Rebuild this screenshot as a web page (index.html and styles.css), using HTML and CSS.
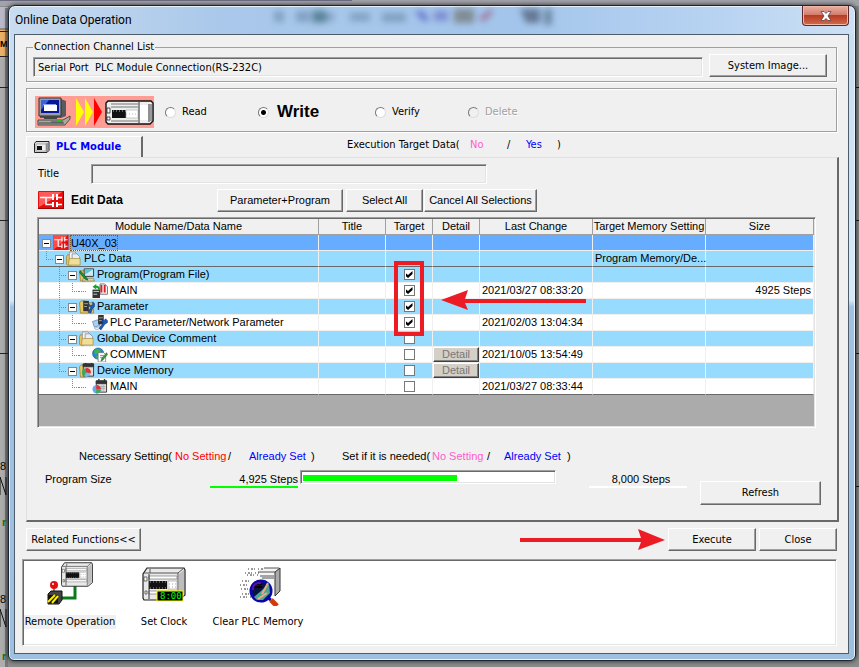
FILE: index.html
```html
<!DOCTYPE html>
<html lang="en">
<head>
<meta charset="utf-8">
<title>Online Data Operation</title>
<link rel="stylesheet" href="styles.css">
</head>
<body>
<svg class="defs" aria-hidden="true">
  <symbol id="folder" viewBox="0 0 16 16">
    <path d="M0 6l1-2h3l1 2v9H1l-1-1z" fill="#e8c55c" stroke="#9a7a28" stroke-width=".7"/>
    <path d="M3 1h6l2 2v9H3z" fill="#f4f4f4" stroke="#7c8790" stroke-width=".8"/>
    <path d="M6 3h5l3 3v8H6z" fill="#e8eef2" stroke="#7c8790" stroke-width=".8"/>
    <path d="M3 8h11.500v7H2z" fill="#efdd9a" stroke="#a58a3c" stroke-width=".7"/>
  </symbol>
  <symbol id="ladder" viewBox="0 0 26 18">
    <rect width="26" height="18" rx="1" fill="#e80c0c"/>
    <path d="M1 16V1h23L15 8z" fill="#ff5a58"/>
    <path d="M0 17.500h26M25.500 0v18" stroke="#a00000"/>
    <path d="M2 6.500h13M8 6.500v7h7M19 6.500h5M19 13.500h5" stroke="#fff" stroke-width="1.500" fill="none"/>
    <path d="M15 3v6M15 11v5M19 3v6M19 11v5" stroke="#fff" stroke-width="2"/>
  </symbol>
  <symbol id="plc" viewBox="0 0 44 34">
    <path d="M5 1h37l1 2v25l-6 5H2l-1-2V7z" fill="#e9e9e9" stroke="#222" stroke-width="1.200"/>
    <path d="M2 6h34v26M36 6l6-5M8 6V2" fill="none" stroke="#555"/>
    <path d="M37 7l5-4v24l-5 4z" fill="#bdbdbd"/>
    <path d="M7 9h28v3H7zM7 24h28v3H7z" fill="#fff" stroke="#777" stroke-width=".7"/>
    <path d="M7 14h18v8H7z" fill="#111"/>
    <path d="M26 14h9v8h-9z" fill="#fff" stroke="#999" stroke-width=".6"/>
    <path d="M8 15h17M8 21h17" stroke="#999" stroke-dasharray="1 2"/>
    <path d="M27 17h8M27 20h8" stroke="#aaa" stroke-dasharray="1 2"/>
    <path d="M2 10h3v4H2zM3 24h2v3H3z" fill="#fff" stroke="#333" stroke-width=".7"/>
    <path d="M7 7v25" stroke="#333"/>
  </symbol>
</svg>

<svg class="backdrop" aria-hidden="true" width="100%" height="667">
  <rect width="100%" height="667" fill="#8b8b8b"/>
  <rect width="100%" height="6" fill="#a3a3ab"/>
  <path d="M0 .5h352" stroke="#6b6b83"/>
  <rect y="7" width="8" height="21" fill="#b9b9c9"/>
  <rect y="30" width="8" height="26" fill="#e9b066"/>
  <rect y="57" width="8" height="610" fill="#adadad"/>
  <rect x="5" y="8" width="3" height="659" fill="#000" opacity=".3"/>
  <path d="M0 31.500h8M0 56.500h8M0 87.500h8M0 220.500h8M0 353.500h8" stroke="#222"/>
  <path d="M856 87.500h3M856 220.500h3M856 353.500h3M856 486.500h3" stroke="#111"/>
  <path d="M0 477v18M0 477l6 18V477M0 609v18M0 609l6 18V609" stroke="#111" fill="none"/>
  <text x="0" y="47" class="bd-bold">M</text>
  <text x="0" y="470" class="bd-text">8</text>
  <text x="0" y="603" class="bd-text">8</text>
  <text x="2" y="526" class="bd-green">r</text>
  <text x="2" y="660" class="bd-green">r</text>
</svg>

<main class="dialog">
  <header class="titlebar">
    <h1>Online Data Operation</h1>
    <svg class="ghost" width="280" height="24" viewBox="0 0 280 24" aria-hidden="true">
      <g fill="#35536f" opacity=".32">
        <rect x="0" y="5" width="10" height="11"/><rect x="22" y="5" width="14" height="11"/><rect x="40" y="7" width="20" height="8"/><rect x="76" y="7" width="20" height="8"/><rect x="108" y="7" width="24" height="9"/>
      </g>
      <rect x="38" y="4" width="14" height="13" fill="#2f6070" opacity=".5"/>
      <path d="M140 5h10l6 10h-8z" fill="#4c50c0" opacity=".6"/>
      <path d="M160 5h14v10h-14z" fill="#5a58b8" opacity=".5"/>
      <path d="M180 3h20v14h-20z" fill="#69655c" opacity=".6"/>
      <path d="M204 12l14-10v6l-8 8z" fill="#a04a70" opacity=".6"/>
      <path d="M246 3h20v14h-14z" fill="#3a465c" opacity=".6"/>
      <path d="M270 3h8v16h-8z" fill="#4a6078" opacity=".6"/>
    </svg>
    <button class="close" aria-label="Close window"><svg width="12" height="10" viewBox="0 0 12 10"><path d="M1 .5h3l2 2 2-2h3L8 5l3 4.500H8l-2-2-2 2H1L4 5z" fill="#fff" stroke="#54424a" stroke-width=".8"/></svg></button>
  </header>

  <div class="client">
    <fieldset class="channel">
      <legend>Connection Channel List</legend>
      <input class="sunken" type="text" readonly aria-label="Connection channel" value="Serial Port&nbsp; PLC Module Connection(RS-232C)">
      <button class="btn system">System Image...</button>
    </fieldset>

    <div class="modes" role="radiogroup" aria-label="Operation">
      <svg class="link-art" width="119" height="32" viewBox="0 0 119 32" aria-hidden="true">
        <rect width="119" height="32" fill="#ff9c94"/>
        <path d="M5 3h21l5 2v15l-5 2H5z" fill="#555b60"/>
        <path d="M4 2h22v18H4z" fill="#9a9fa4" stroke="#333"/>
        <path d="M6 4h18v13H6z" fill="#0a1696"/>
        <path d="M6 4h8L6 14z" fill="#3c62e0"/>
        <path d="M9 9h13v6H9z" fill="#fff"/><path d="M8 8h13v1H8z" fill="#88a0f0"/>
        <path d="M9 20h13v3H9z" fill="#444"/>
        <path d="M4 24h24l7-4v3l-5 6H3v-5z" fill="#a9a9a0" stroke="#333" stroke-width=".8"/>
        <path d="M4 27h25M16 26h12" stroke="#444"/><path d="M22 24h4v2h-4z" fill="#1bc31b"/>
        <path d="M41 2l8 14-8 14zM50 2l8 14-8 14z" fill="#ff0"/>
        <path d="M59 2l8 14-8 14z" fill="#f00"/>
        <path d="M73 5h43l2 2v18l-3 3H73l-2-2V7z" fill="#eee" stroke="#111" stroke-width="1.400"/>
        <path d="M76 8h27M76 25h27M76 11h27" stroke="#777"/>
        <path d="M77 14h14v8H77z" fill="#111"/><path d="M91 14h12v8H91z" fill="#fff" stroke="#aaa" stroke-width=".6"/>
        <path d="M78 15h13M91 18h11" stroke="#bbb" stroke-dasharray="1 2"/>
        <path d="M104 6v21M114 8v18" stroke="#333"/><path d="M105 9h8v15h-8z" fill="#fff"/><path d="M115 8h2v17h-2z" fill="#999"/>
        <path d="M72 12h3v5h-3zM72 21h3v3h-3z" fill="#fff" stroke="#222" stroke-width=".8"/>
      </svg>
      <label class="m-read"><input type="radio" name="mode">Read</label>
      <label class="m-write"><input type="radio" name="mode" checked><strong>Write</strong></label>
      <label class="m-verify"><input type="radio" name="mode">Verify</label>
      <label class="m-delete"><input type="radio" name="mode" disabled>Delete</label>
    </div>

    <div class="tabrow">
      <button class="tab" role="tab" aria-selected="true"><svg width="16" height="12" viewBox="0 0 16 12" aria-hidden="true"><path d="M2 .5h13v9l-2 2H.500v-9z" fill="#ddd" stroke="#222"/><path d="M2 3h10v7H2z" fill="#eee" stroke="#888" stroke-width=".6"/><path d="M3 5h5v4H3z" fill="#111"/><path d="M13 2v9" stroke="#555"/></svg>PLC Module</button>
      <p class="targets"><span>Execution Target Data(</span><span class="pink">No</span><span>/</span><span class="blue">Yes</span><span>)</span></p>
    </div>

    <section class="page">
      <div class="title-line">
        <label for="title">Title</label>
        <input id="title" class="sunken" type="text">
      </div>
      <div class="edit-line">
        <svg width="26" height="18" aria-hidden="true"><use href="#ladder"/></svg>
        <h2>Edit Data</h2>
        <button class="btn b-param">Parameter+Program</button>
        <button class="btn b-all">Select All</button>
        <button class="btn b-cancel">Cancel All Selections</button>
      </div>

      <div class="grid">
        <table>
          <colgroup><col><col class="c-title"><col class="c-target"><col class="c-detail"><col class="c-date"><col class="c-mem"><col class="c-size"></colgroup>
          <thead><tr><th>Module Name/Data Name</th><th>Title</th><th>Target</th><th>Detail</th><th>Last Change</th><th>Target Memory Setting</th><th>Size</th></tr></thead>
          <tbody>
            <tr class="root"><td><div class="node"><i class="tog"></i><svg class="ic" viewBox="0 0 16 16"><rect width="16" height="16" fill="#e80c0c"/><path d="M0 16V0h15L9 8z" fill="#ff4a48"/><path d="M1 5h8M5 5v7h4M12 5h3M12 12h3M9 2v5M9 9v5M12 2v5M12 9v5" stroke="#fff" stroke-width="1.200" fill="none"/></svg><span class="focus">U40X_03</span></div></td><td></td><td></td><td></td><td></td><td></td><td></td></tr>
            <tr class="group plc"><td><div class="node"><i class="ell"></i><i class="tog"></i><svg class="ic"><use href="#folder"/></svg><span>PLC Data</span></div></td><td></td><td></td><td></td><td></td><td>Program Memory/De...</td><td></td></tr>
            <tr class="group"><td><div class="node"><i></i><i class="tee"></i><i class="tog"></i><svg class="ic" viewBox="0 0 16 16"><path d="M0 4h5l1 2v9H1z" fill="#e6c65c" stroke="#927421" stroke-width=".7"/><path d="M5 2h10v8H5z" fill="#cfeaf0" stroke="#333"/><path d="M6 3h8l-8 5z" fill="#58c6d0"/><path d="M4 12h11l1 3H3z" fill="#e0d28a" stroke="#776" stroke-width=".7"/><path d="M1 4l7 8 1 2-3-1-6-7z" fill="#1c8f4a" stroke="#064a20" stroke-width=".6"/></svg><span>Program(Program File)</span></div></td><td></td><td><input type="checkbox" checked aria-label="Program"></td><td></td><td></td><td></td><td></td></tr>
            <tr><td><div class="node"><i></i><i class="v"></i><i class="ell"></i><i></i><svg class="ic" viewBox="0 0 16 16"><path d="M8 1h5l3 3v8H8z" fill="#f0f0fa" stroke="#777"/><path d="M9.500 2v8M13 2v8" stroke="#e02020" stroke-width="2"/><path d="M0 7h8v9H0z" fill="#333"/><path d="M1 9h6M1 12h4" stroke="#ccc"/><path d="M8 7C8 3 5 3 4 3V1L0 4l4 3V5c2 0 2 1 2 3z" fill="#18a030"/></svg><span>MAIN</span></div></td><td></td><td><input type="checkbox" checked aria-label="Program MAIN"></td><td></td><td>2021/03/27 08:33:20</td><td></td><td class="num">4925 Steps</td></tr>
            <tr class="group"><td><div class="node"><i></i><i class="tee"></i><i class="tog"></i><svg class="ic" viewBox="0 0 16 16"><path d="M0 4l2-2h4l1 2h8v11H1z" fill="#e8c860" stroke="#8e7226" stroke-width=".7"/><path d="M4 2h6v11H4z" fill="#333"/><path d="M5 5h4M5 8h3" stroke="#aaa"/><path d="M10 5l2 2 2-1V3l2 2v3l-2 2-2 5-3-1 3-5-3-2z" fill="#1c58b8" stroke="#0a2a70" stroke-width=".5"/></svg><span>Parameter</span></div></td><td></td><td><input type="checkbox" checked aria-label="Parameter"></td><td></td><td></td><td></td><td></td></tr>
            <tr><td><div class="node"><i></i><i class="v"></i><i class="ell"></i><i></i><svg class="ic" viewBox="0 0 16 16"><path d="M0 7l6-2 2 6-6 2z" fill="#a8d0f4" stroke="#4a7ab0" stroke-width=".7"/><path d="M2 14l7-2v2l-5 2z" fill="#e6eef6" stroke="#6a86a0" stroke-width=".5"/><path d="M6 0h6v10H6z" fill="#333"/><path d="M7 3h4M7 6h3" stroke="#aaa"/><path d="M10 4l2 2 2-2 2 2v2l-3 2-4 6-2-2 4-5z" fill="#1c58b8" stroke="#0a2a70" stroke-width=".5"/></svg><span>PLC Parameter/Network Parameter</span></div></td><td></td><td><input type="checkbox" checked aria-label="PLC Parameter/Network Parameter"></td><td></td><td>2021/02/03 13:04:34</td><td></td><td></td></tr>
            <tr class="group"><td><div class="node"><i></i><i class="tee"></i><i class="tog"></i><svg class="ic"><use href="#folder"/></svg><span>Global Device Comment</span></div></td><td></td><td><input type="checkbox" aria-label="Global Device Comment"></td><td></td><td></td><td></td><td></td></tr>
            <tr><td><div class="node"><i></i><i class="v"></i><i class="ell"></i><i></i><svg class="ic" viewBox="0 0 16 16"><circle cx="6" cy="7" r="6" fill="#2a86c8" stroke="#155080" stroke-width=".6"/><path d="M2 3l4-1 3 2-3 3-3 1-1-2zM4 9l3 1-1 3-2-1z" fill="#38b848"/><path d="M6 6h6l2 2v8H6z" fill="#fff" stroke="#777" stroke-width=".8"/><path d="M8 9h4M8 11h3" stroke="#88a"/><path d="M15 6l1 2-5 6-2 1 1-3z" fill="#3c9a3c" stroke="#124c12" stroke-width=".5"/></svg><span>COMMENT</span></div></td><td></td><td><input type="checkbox" aria-label="COMMENT"></td><td class="act"><button class="detail" disabled>Detail</button></td><td>2021/10/05 13:54:49</td><td></td><td></td></tr>
            <tr class="group"><td><div class="node"><i></i><i class="tee last"></i><i class="tog"></i><svg class="ic" viewBox="0 0 16 16"><path d="M0 4l2-2h4l1 2v11H1z" fill="#e8c860" stroke="#8e7226" stroke-width=".7"/><path d="M4 1h11v13H4z" fill="#ddd" stroke="#333"/><path d="M4 1h11v3H4zM6 0h1v2M12 0h1v2" fill="#333" stroke="#333"/><circle cx="7" cy="10" r="4.500" fill="#3aa860"/><path d="M7 10V5a5 5 0 0 1 5 6z" fill="#e83030"/><path d="M7 10l5 1a5 5 0 0 1-7 3z" fill="#7ab8f0"/></svg><span>Device Memory</span></div></td><td></td><td><input type="checkbox" aria-label="Device Memory"></td><td class="act"><button class="detail" disabled>Detail</button></td><td></td><td></td><td></td></tr>
            <tr class="end"><td><div class="node"><i></i><i></i><i class="ell"></i><i></i><svg class="ic" viewBox="0 0 16 16"><path d="M4 2h11v12H4z" fill="#e4e4e4" stroke="#333"/><path d="M4 2h11v3H4zM6 0h1v2M12 0h1v2" fill="#333" stroke="#333"/><path d="M8 8h6M8 10h6M10 6v7M12 6v7" stroke="#999" stroke-width=".6"/><circle cx="4.500" cy="11" r="4.500" fill="#6aa8e8"/><path d="M4 11V6.500a4.500 4.500 0 0 1 5 4.500z" fill="#e83030"/><path d="M4 11l5 1a5 5 0 0 1-5 3.500z" fill="#3aa860"/></svg><span>MAIN</span></div></td><td></td><td><input type="checkbox" aria-label="Device Memory MAIN"></td><td></td><td>2021/03/27 08:33:44</td><td></td><td></td></tr>
          </tbody>
        </table>
        <div class="mark-box"></div>
        <svg class="mark-arrow" width="146" height="22" viewBox="0 0 146 22" aria-hidden="true"><path d="M0 11L27 1 24 10h121v4H24l3 7z" fill="#ed1c24"/></svg>
      </div>

      <p class="legend"><span>Necessary Setting(</span><span class="red">No Setting</span><span>/</span><span class="blue">Already Set</span><span>)</span><span>Set if it is needed(</span><span class="pink">No Setting</span><span>/</span><span class="blue">Already Set</span><span>)</span></p>

      <div class="usage">
        <span class="u-label">Program Size</span>
        <span class="u-used">4,925 Steps</span>
        <div class="meter" role="progressbar" aria-valuenow="4925" aria-valuemax="8000" aria-label="Program size"><div class="fill" style="width:61.5%"></div></div>
        <span class="u-total">8,000 Steps</span>
        <button class="btn refresh">Refresh</button>
      </div>
    </section>

    <div class="actions">
      <button class="btn related">Related Functions&lt;&lt;</button>
      <svg class="arrow" width="146" height="22" viewBox="0 0 146 22" aria-hidden="true"><path d="M145 11L118 0l3 9H0v4h121l-3 8z" fill="#ed1c24"/></svg>
      <button class="btn exec">Execute</button>
      <button class="btn closebtn">Close</button>
    </div>

    <div class="functions">
      <button class="fn sel">
        <svg width="48" height="44" viewBox="0 0 48 44" aria-hidden="true"><path d="M29 24v12H16" fill="none" stroke="#0a7a1a" stroke-width="3"/><use href="#plc" x="14" y="0" width="34" height="25"/><path d="M8 22v9" stroke="#888" stroke-width="2"/><circle cx="8" cy="23" r="4" fill="#e01010"/><circle cx="7" cy="22" r="1" fill="#fff"/><path d="M2 32l3-3h11v9l-3 4H2z" fill="#444" stroke="#111"/><path d="M2 33h10v8H2z" fill="#111"/><path d="M2 40l7-7M6 41l6-7" stroke="#fe0" stroke-width="2"/></svg>
        <span>Remote Operation</span></button>
      <button class="fn">
        <svg width="48" height="44" viewBox="0 0 48 44" aria-hidden="true"><use href="#plc" x="2" y="5" width="44" height="34"/><rect x="17" y="29" width="26" height="10" fill="#000" stroke="#ff0"/><text x="20" y="37" class="led">8:00</text></svg>
        <span>Set Clock</span></button>
      <button class="fn">
        <svg width="48" height="44" viewBox="0 0 48 44" aria-hidden="true"><path d="M24 9l4-3h18v23l-5 5H26V9z" fill="#f4f4f4"/><path d="M30 6h15M24 10h17M26 14h14M28 16h12" stroke="#555"/><path d="M41 10l5-4v23l-5 5z" fill="#aaa" stroke="#333"/><path d="M14 7h16M11 11h14M8 19h10M6 23h10M7 27h10M8 32h12M6 35h14M13 13h12" stroke="#333" stroke-dasharray="1 2 2 1 1 3"/><circle cx="27" cy="29" r="10" fill="#0a1440" stroke="#0808a8" stroke-width="3"/><path d="M20 35l15-13 1 9-7 7h-6z" fill="#4aa890"/><path d="M28 32l6-11M24 37l9-6" stroke="#f0a888" stroke-width="2"/><path d="M20 25h8M21 22h7" stroke="#000" stroke-width="2"/><path d="M19 28c0-6 3-7 8-7" stroke="#6010a0" stroke-width="2" fill="none"/><path d="M34 36l3 2" stroke="#0808a8" stroke-width="3"/><path d="M37 38l6 6" stroke="#d83808" stroke-width="5"/></svg>
        <span>Clear PLC Memory</span></button>
    </div>
  </div>
</main>
</body>
</html>
```
FILE: styles.css
```css
:root {
  --face: #f0f0f0;
  --shade: #a0a0a0;
  --dark: #696969;
  --tahoma: Tahoma, "DejaVu Sans Condensed", "Liberation Sans", sans-serif;
  --sans: "Liberation Sans", Arial, sans-serif;
}
* { box-sizing: border-box; }
body {
  margin: 0;
  padding: 5px 3px 5px 8px;
  font: 11px/16px var(--tahoma);
  color: #000;
  background: #8b8b8b;
}
p, h1, h2 { margin: 0; font-size: inherit; font-weight: normal; }
button, input { font: inherit; color: inherit; margin: 0; padding: 0; border-radius: 0; }
svg { display: block; flex: none; }
.defs { display: none; }
.backdrop { position: absolute; top: 0; left: 0; z-index: -1; }
.bd-bold { font: bold 9px var(--sans); }
.bd-text { font: 11px var(--sans); }
.bd-green { font: bold 11px var(--sans); fill: #087a08; }
.pink { color: #ff5ccd; }
.blue { color: #00f; }
.red { color: #f00; }

.dialog {
  padding: 0 6px 6px 5px;
  border: 1px solid #1c2630;
  border-radius: 7px 7px 6px 6px;
  background: linear-gradient(90deg, #c9dcf0 0, #a9c8ea 25%, #a3c5eb 60%, #b9d4f2 85%, #cde0f4 100%) 0 0 / 100% 29px no-repeat,
    linear-gradient(#c5dcf2 0, #d8e9fa 45%, #9fc1e4 46%, #9fbfdf 100%);
  box-shadow: inset 0 0 0 1px #e6f1fb, 0 0 5px #222;
}
.titlebar { display: flex; align-items: flex-start; height: 28px; }
.titlebar h1 { font: 12px/28px Roboto, sans-serif; flex: 1; margin-left: 1px; }
.ghost { filter: blur(3px); margin-right: 248px; margin-right: calc(295px - 47px); }
.close {
  display: flex; align-items: center; justify-content: center;
  width: 47px; height: 20px;
  border: 1px solid #5a2a2a; border-top: 0;
  border-radius: 0 0 4px 4px;
  background: linear-gradient(#e8b0a4 0, #d67c6c 45%, #b83c24 50%, #d06a4c 100%);
  box-shadow: inset 0 0 0 1px #f0b8a8;
}
.client {
  padding: 5px 11px 7px 7px;
  border: 1px solid #4c5c68;
  background: var(--face);
}

.btn {
  font: 11px/18px var(--tahoma);
  height: 23px;
  border: 1px solid;
  border-color: #fff var(--dark) var(--dark) #fff;
  background: var(--face);
  box-shadow: inset -1px -1px 0 var(--shade);
  white-space: nowrap;
}
.sunken {
  height: 20px;
  border: 1px solid;
  border-color: var(--shade) #fff #fff var(--shade);
  box-shadow: inset 1px 1px 0 var(--dark), inset -1px -1px 0 #e3e3e3;
  background: var(--face);
  padding: 0 4px;
}

.channel {
  display: flex; align-items: flex-end;
  margin: 0 0 0 4px;
  padding: 0 9px 4px 6px;
  border: 1px solid var(--shade);
  box-shadow: 1px 1px 0 #fff;
  min-width: 0;
}
.channel legend { padding: 0 1px; height: 14px; line-height: 14px; margin: 0; }
.channel .sunken { flex: 1; min-width: 0; }
.channel .system { width: 118px; margin-left: 6px; }

.modes {
  display: flex; align-items: center;
  height: 44px;
  margin: 6px 0 0 4px;
  padding: 4px 0 0 8px;
  border: 1px solid var(--shade);
  box-shadow: 1px 1px 0 #fff, inset 1px 1px 0 #fff;
}
.modes label { display: flex; align-items: center; gap: 6px; }
.modes strong { font: bold 17px/20px var(--sans); margin-left: 2px; }
.m-read { margin-left: 11px; width: 93px; }
.m-write { width: 117px; }
.m-verify { width: 93px; }
.m-delete { color: #a0a0a0; text-shadow: 1px 1px 0 #fff; }
input[type="radio"] {
  appearance: none;
  width: 11px; height: 11px;
  border: 1px solid;
  border-color: #777 #ddd #ddd #777;
  border-radius: 50%;
  background: #fff;
}
input[type="radio"]:checked { background: radial-gradient(circle, #000 0 2px, #fff 3px); }
input[type="radio"]:disabled { background: var(--face); }

.tabrow { display: flex; align-items: flex-start; margin: 4px 0 0 4px; height: 21px; }
.tab {
  display: flex; align-items: center; gap: 6px;
  width: 117px; height: 21px;
  padding-left: 7px;
  border: 1px solid; border-width: 1px 2px 0 1px;
  border-color: #fff var(--dark) transparent #fff;
  background: var(--face);
  font: bold 11px/20px var(--tahoma);
  color: #00f;
}
.targets { display: grid; grid-template-columns: 123px 37px 19px 31px auto; margin: 1px 0 0 204px; }

.page {
  margin-left: 4px; margin-right: -2px;
  padding: 6px 16px 15px 11px;
  border: 1px solid #e0e0e0;
  border-right: 2px solid var(--dark);
  border-bottom: 2px solid var(--dark);
}
.title-line { display: flex; align-items: center; }
.title-line label { width: 53px; }
.title-line .sunken { width: 396px; }
.edit-line { display: flex; align-items: center; margin-top: 4px; height: 24px; }
.edit-line h2 { font: bold 12px/16px var(--sans); margin-left: 7px; width: 146px; }
.edit-line .btn { font-family: var(--sans); }
.b-param { width: 126px; margin-right: 3px; }
.b-all { width: 77px; margin-right: 1px; }
.b-cancel { width: 113px; }

.grid {
  position: relative;
  height: 211px;
  margin: 5px 5px 0 -1px;
  border: 1px solid;
  border-color: var(--shade) #fff #fff var(--shade);
  box-shadow: inset 1px 1px 0 var(--dark), inset -1px -1px 0 #e3e3e3;
  padding: 1px;
  background: #ababab;
  font-family: var(--sans);
}
table { width: 100%; border-collapse: separate; border-spacing: 0; table-layout: fixed; line-height: 15px; }
.c-title { width: 67px; } .c-target { width: 47px; } .c-detail { width: 47px; }
.c-date { width: 113px; } .c-mem { width: 113px; } .c-size { width: 108px; }
th { height: 16px; padding: 0; font-weight: normal; background: var(--face); border-right: 1px solid var(--shade); border-bottom: 1px solid var(--shade); white-space: nowrap; }
td { height: 16px; padding: 0 0 0 2px; background: #fff; border-right: 1px solid var(--face); border-bottom: 1px solid var(--face); white-space: nowrap; }
td:first-child { padding: 0; }
td:nth-child(3) { text-align: center; padding: 0; }
.root td { background: #66adff; }
.group td { background: #97dcff; }
.plc td, .end td { border-bottom-color: var(--dark); }
td.num { text-align: right; padding-right: 2px; }
.node { display: flex; align-items: center; height: 15px; padding-left: 1px; }
.node i { width: 13px; height: 15px; flex: none; --dots: repeating-linear-gradient(#888 0 1px, transparent 1px 2px); --dash: repeating-linear-gradient(90deg, #888 0 1px, transparent 1px 2px); }
.node .v { background: var(--dots) 6px 0 / 1px 100% no-repeat; }
.node .tee { background: var(--dots) 6px 0 / 1px 100% no-repeat, var(--dash) 6px 8px / 7px 1px no-repeat; }
.node .ell, .node .last { background: var(--dots) 6px 0 / 1px 8px no-repeat, var(--dash) 6px 8px / 7px 1px no-repeat; }
.node .ell + i:not(.tog) { background: var(--dash) 0 8px / 8px 1px no-repeat; }
.node .tog {
  width: 9px; height: 9px; margin: 1px 2px 0;
  border: 1px solid #888;
  background: linear-gradient(#000, #000) 1px 3px / 5px 1px no-repeat #fff;
}
.ic { width: 16px; height: 15px; margin-right: 2px; }
.focus { outline: 1px dotted #7a5a20; height: 14px; line-height: 15px; }
input[type="checkbox"] { appearance: none; display: block; width: 11px; height: 11px; margin: 0 auto; border: 1px solid #777; background: #fff; }
input[type="checkbox"]::before { content: ""; display: block; width: 7px; height: 7px; margin: 1px; }
input[type="checkbox"]:checked::before { background: #000; clip-path: polygon(0 29%, 0 71%, 36% 100%, 100% 43%, 100% 0, 36% 57%); }
td.act { padding: 0; }
.detail {
  display: block; width: 100%; height: 15px; line-height: 13px;
  border: 1px solid; border-color: #fff #404040 #404040 #fff;
  box-shadow: inset -1px -1px 0 #808080;
  background: #d4d0c8; color: #777;
}
.mark-box { position: absolute; top: 43px; right: 391px; width: 30px; height: 75px; border: 4px solid #ed1c24; }
.mark-arrow { position: absolute; top: 71px; right: 228px; }

.legend {
  display: grid; grid-template-columns: 96px 53px 21px 62px 31px 90px 55px 17px 63px auto;
  margin: 20px 0 0 41px;
  font-family: var(--sans);
}
.usage { display: flex; align-items: flex-start; margin: 6px 0 0 7px; font-family: var(--sans); }
.usage span { margin-top: 1px; height: 17px; }
.u-label { width: 165px; }
.u-used { width: 88px; text-align: right; border-bottom: 2px solid #0f0; }
.meter {
  flex: 1; height: 14px; margin-left: 2px; padding: 4px 2px 0;
  background: #fff; border: 1px solid; border-color: var(--shade) #fff #fff var(--shade);
  box-shadow: inset 1px 1px 0 var(--dark), inset -1px -1px 0 #e3e3e3;
}
.fill { height: 6px; background: #0f0; }
.u-total { width: 98px; margin-left: 33px; padding-left: 6px; text-align: center; border-bottom: 2px solid #fff; }
.refresh { width: 121px; height: 24px; margin: 11px 0 0 13px; }

.actions { display: flex; align-items: center; margin: 5px 0 0 4px; height: 25px; }
.related { width: 115px; }
.arrow { margin-left: auto; }
.exec { width: 88px; margin-left: 2px; }
.closebtn { width: 78px; margin-left: 3px; }

.functions {
  display: flex;
  height: 87px;
  margin-top: 7px;
  border: 1px solid; border-color: var(--shade) #fff #fff var(--shade);
  box-shadow: inset 1px 1px 0 var(--dark), inset -1px -1px 0 #e3e3e3;
  background: #fff;
}
.fn { display: flex; flex-direction: column; align-items: center; width: 94px; height: 74px; padding: 2px 0 0; border: 0; background: none; white-space: nowrap; }
.fn span { margin-top: 9px; line-height: 14px; padding: 0 1px; }
.sel span { background: #f0f0f0; }
.led { font: 9px "DejaVu Sans Mono", monospace; fill: #0f0; }
```
